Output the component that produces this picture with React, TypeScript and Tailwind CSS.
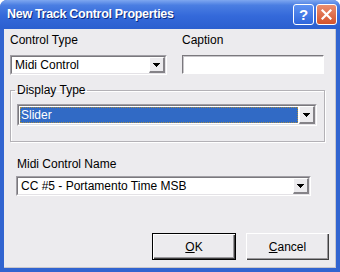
import type { ReactNode } from 'react';

function Arrow() {
  return (
    <svg width="7" height="4" viewBox="0 0 7 4" className="block">
      <path d="M0 0h7v1H0zM1 1h5v1H1zM2 2h3v1H2zM3 3h1v1H3z" fill="#000" />
    </svg>
  );
}

function Combo({ text, w, h, selected }: { text: string; w: string; h: string; selected?: boolean }) {
  return (
    <div className={`${w} ${h} flex border border-t-[#a19fa5] border-l-[#a19fa5] border-r-white border-b-white`}>
      <div className="flex flex-1 border border-t-[#7a787d] border-l-[#7a787d] border-r-[#e4e2e6] border-b-[#e4e2e6] bg-white">
        <div className="flex flex-1 items-center p-[1px]">
          {selected ? (
            <div className="flex h-full flex-1 items-center bg-[#316ac5] pl-[1px] text-white outline-1 outline-dotted outline-[#a08a4a] -outline-offset-1">
              {text}
            </div>
          ) : (
            <span className="pl-[2px]">{text}</span>
          )}
        </div>
        <div className="flex w-[16px] items-center justify-center border-t border-l border-t-white border-l-white border-r-2 border-b-2 border-r-[#858388] border-b-[#858388] bg-[#ecebee]">
          <Arrow />
        </div>
      </div>
    </div>
  );
}

function Label({ children, className }: { children: ReactNode; className?: string }) {
  return <div className={`h-[14px] leading-[14px] ${className ?? ''}`}>{children}</div>;
}

function Button({ children, def }: { children: ReactNode; def?: boolean }) {
  return (
    <button
      className={`flex h-[27px] items-center justify-center bg-[#ecebee] ${
        def
          ? 'w-[84px] border border-black shadow-[inset_1px_1px_0_#fff,inset_-1px_-1px_0_#404040,inset_-2px_-2px_0_#9a989c]'
          : 'w-[83px] shadow-[inset_1px_1px_0_#fff,inset_-1px_-1px_0_#404040,inset_-2px_-2px_0_#9a989c]'
      }`}
    >
      {children}
    </button>
  );
}

export default function App() {
  return (
    <div className="h-[272px] w-[340px] bg-white font-['Liberation_Sans',Arial,sans-serif] text-[12px] text-black">
      <div className="flex h-full flex-col rounded-t-[7px] bg-[#3164d0]">
        {/* Title bar */}
        <div className="flex h-[29px] items-center rounded-t-[7px] bg-[linear-gradient(to_bottom,#7ea7f0,#4a7ee2_18%,#3469da_55%,#2b5fcf)] pl-[7px] pr-[3px]">
          <span className="flex-1 text-[12.5px] font-bold tracking-[-0.3px] text-white [text-shadow:1px_1px_0_#0a2a80]">
            New Track Control Properties
          </span>
          <div className="flex gap-[2px]">
            <div className="flex h-[21px] w-[21px] items-center justify-center rounded-[3px] border border-white bg-[linear-gradient(to_bottom,#5e92f2,#2f66dc)] text-[15px] font-bold leading-none text-white">
              ?
            </div>
            <div className="flex h-[21px] w-[21px] items-center justify-center rounded-[3px] border border-white bg-[linear-gradient(to_bottom,#ea8e70,#d4532c)]">
              <svg width="11" height="11" viewBox="0 0 11 11">
                <path d="M1.5 1.5l8 8M9.5 1.5l-8 8" stroke="#fff" strokeWidth="2.2" strokeLinecap="square" />
              </svg>
            </div>
          </div>
        </div>

        {/* Body */}
        <div className="mx-[4px] mb-[4px] flex flex-1 flex-col bg-[#ecebee] pt-[4px] shadow-[inset_-1px_-1px_0_#c9c7cc]">
          <div className="ml-[6px] flex gap-[15px]">
            <div className="w-[157px]">
              <Label>Control Type</Label>
              <div className="mt-[8px]">
                <Combo text="Midi Control" w="w-[157px]" h="h-[20px]" />
              </div>
            </div>
            <div className="w-[142px]">
              <Label>Caption</Label>
              <div className="mt-[8px] h-[19px] w-[142px] border border-t-[#7a787d] border-l-[#7a787d] border-r-white border-b-white bg-white shadow-[inset_1px_1px_0_#c8c6ca]" />
            </div>
          </div>

          <fieldset className="ml-[6px] mt-[8px] w-[315px] border border-[#b3b1b6] pb-[15px] pl-[6px] pt-[7px] shadow-[inset_1px_1px_0_#fff,1px_1px_0_#fff]">
            <legend className="-ml-[2px] h-[14px] px-[2px] leading-[14px]">Display Type</legend>
            <Combo text="Slider" w="w-[300px]" h="h-[22px]" selected />
          </fieldset>

          <Label className="ml-[13px] mt-[15px]">Midi Control Name</Label>
          <div className="ml-[12px] mt-[5px]">
            <Combo text="CC #5 - Portamento Time MSB" w="w-[295px]" h="h-[20px]" />
          </div>

          <div className="mr-[7px] mt-[37px] flex justify-end gap-[10px]">
            <Button def>
              <span>
                <span className="underline">O</span>K
              </span>
            </Button>
            <Button>
              <span>
                <span className="underline">C</span>ancel
              </span>
            </Button>
          </div>
        </div>
      </div>
    </div>
  );
}
